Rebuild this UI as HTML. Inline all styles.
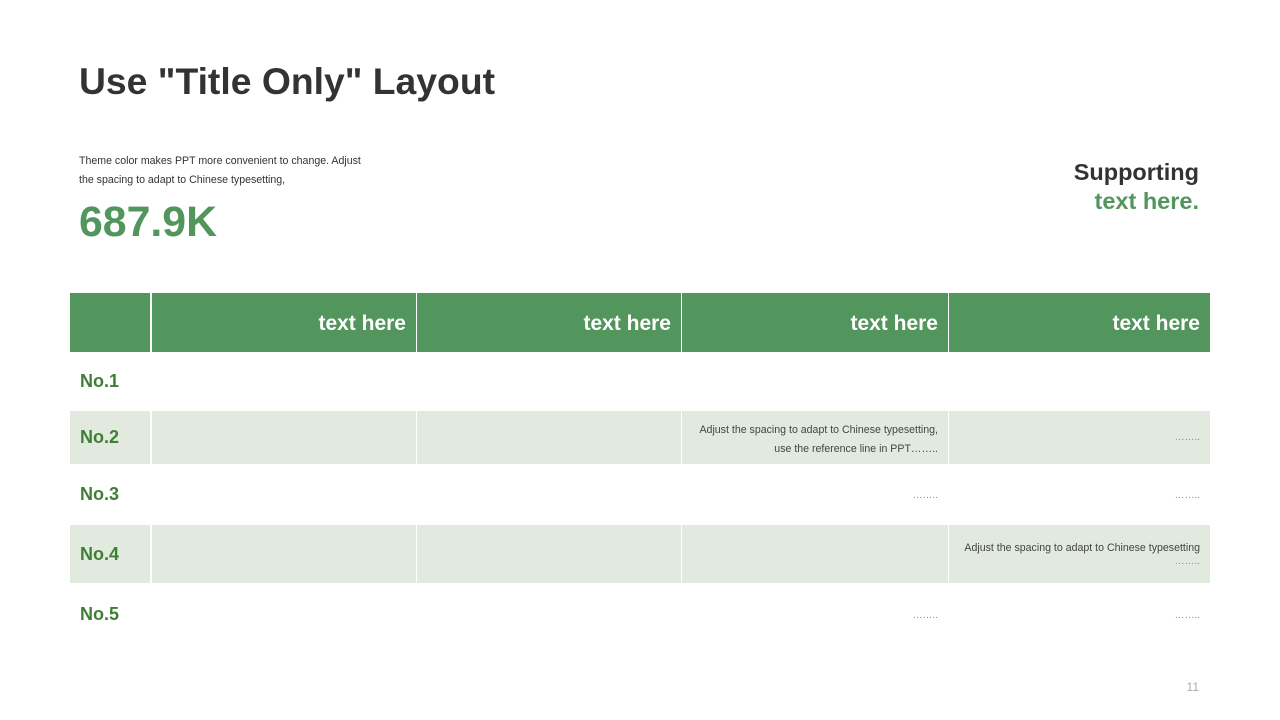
<!DOCTYPE html>
<html><head><meta charset="utf-8"><style>
body{margin:0;width:1280px;height:720px;background:#fff;position:relative;overflow:hidden;font-family:"Liberation Sans",Arial,sans-serif}
.a{position:absolute}
.h{background:#52965e;top:293px;height:59px;color:#fff;font-weight:bold;font-size:21px;text-align:right;line-height:61px;box-sizing:border-box;padding-right:10px}
.b{background:#e2eadf;height:53px}
.no{left:80px;font-weight:bold;font-size:18px;color:#3f7f35}
.s{font-size:10.6px;color:#444;text-align:right;line-height:19px}
.d{font-size:10px;color:#888;text-align:right}
</style></head><body>
<div class="a" style="left:79px;top:60px;font-size:37.3px;font-weight:bold;color:#333">Use "Title Only" Layout</div>
<div class="a" style="left:79px;top:152px;font-size:10.6px;color:#333;line-height:19px">Theme color makes PPT more convenient to change. Adjust<br>the spacing to adapt to Chinese typesetting,</div>
<div class="a" style="left:79px;top:198px;font-size:42.8px;font-weight:bold;color:#52965e">687.9K</div>
<div class="a" style="right:81px;top:158px;font-size:23.5px;font-weight:bold;color:#333;text-align:right;line-height:29px">Supporting<br><span style="color:#52965e">text here.</span></div>

<div class="a h" style="left:70px;width:80px"></div>
<div class="a h" style="left:152px;width:264px">text here</div>
<div class="a h" style="left:417px;width:264px">text here</div>
<div class="a h" style="left:682px;width:266px">text here</div>
<div class="a h" style="left:949px;width:261px">text here</div>

<div class="a b" style="left:70px;top:411px;width:80px"></div>
<div class="a b" style="left:152px;top:411px;width:264px"></div>
<div class="a b" style="left:417px;top:411px;width:264px"></div>
<div class="a b" style="left:682px;top:411px;width:266px"></div>
<div class="a b" style="left:949px;top:411px;width:261px"></div>
<div class="a b" style="left:70px;top:525px;width:80px;height:58px"></div>
<div class="a b" style="left:152px;top:525px;width:264px;height:58px"></div>
<div class="a b" style="left:417px;top:525px;width:264px;height:58px"></div>
<div class="a b" style="left:682px;top:525px;width:266px;height:58px"></div>
<div class="a b" style="left:949px;top:525px;width:261px;height:58px"></div>

<div class="a no" style="top:371px">No.1</div>
<div class="a no" style="top:427px">No.2</div>
<div class="a no" style="top:484px">No.3</div>
<div class="a no" style="top:544px">No.4</div>
<div class="a no" style="top:604px">No.5</div>

<div class="a s" style="right:342px;top:421px">Adjust the spacing to adapt to Chinese typesetting,<br>use the reference line in PPT……..</div>
<div class="a d" style="right:80px;top:432px">……..</div>
<div class="a d" style="right:342px;top:490px">……..</div>
<div class="a d" style="right:80px;top:490px">……..</div>
<div class="a s" style="right:80px;top:539px">Adjust the spacing to adapt to Chinese typesetting</div>
<div class="a d" style="right:80px;top:556px">……..</div>
<div class="a d" style="right:342px;top:610px">……..</div>
<div class="a d" style="right:80px;top:610px">……..</div>

<div class="a" style="right:81px;top:680px;font-size:12px;color:#aaa">11</div>
</body></html>
